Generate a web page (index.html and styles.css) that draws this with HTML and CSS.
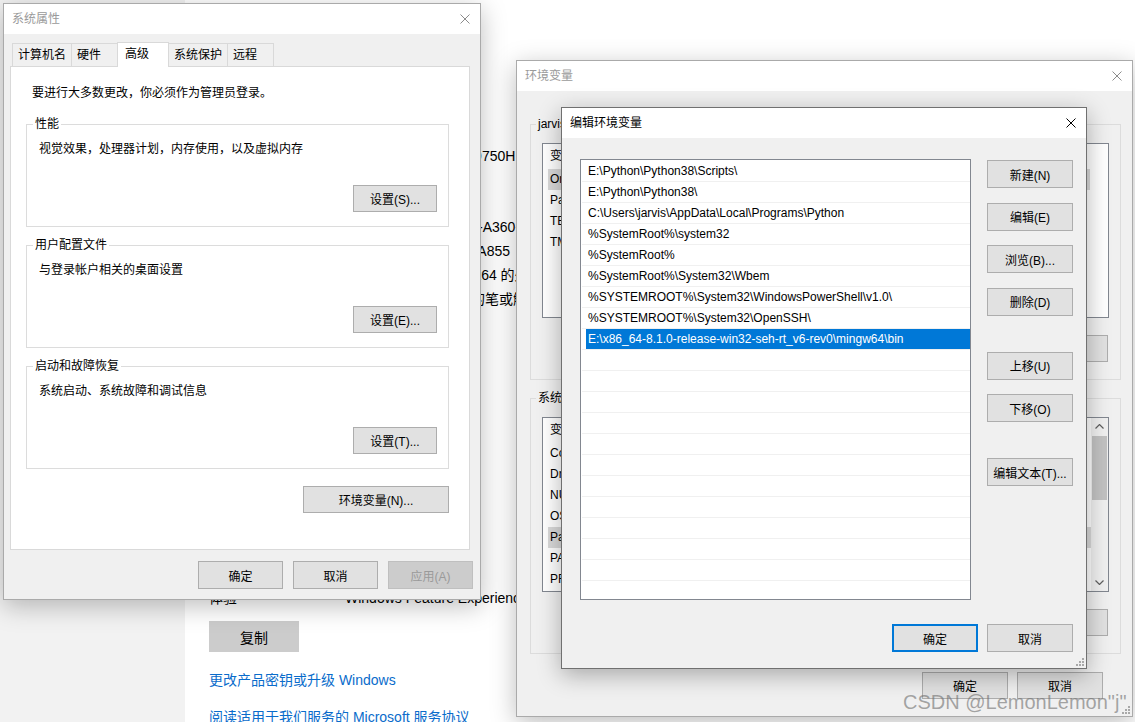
FILE: index.html
```html
<!DOCTYPE html>
<html lang="zh-CN">
  <head>
    <meta charset="UTF-8" />
    <meta name="viewport" content="width=device-width, initial-scale=1.0" />
    <title>编辑环境变量</title>
    <link rel="stylesheet" href="styles.css">
  </head>
  <body>
    <!-- settings page in the background -->
    <div class="settings">
      <div class="nav"></div>
      <div class="main">
        <div class="device-specs">
          <div class="spec"><span class="spec-name">设备名称</span><span class="spec-value">LAPTOP-JARVIS</span></div>
          <div class="spec"><span class="spec-name">处理器</span><span class="spec-value">Intel(R) Core(TM) i7-9750H CPU @ 2.60GHz<br />2.59 GHz</span></div>
          <div class="spec"><span class="spec-name">机带 RAM</span><span class="spec-value">16.0 GB</span></div>
          <div class="spec"><span class="spec-name">设备 ID</span><span class="spec-value">E2BDC4D3-1A4F-4C-A360-5D2E9F1C7B84</span></div>
          <div class="spec"><span class="spec-name">产品 ID</span><span class="spec-value">00342-35901-0000-AA855</span></div>
          <div class="spec"><span class="spec-name">系统类型</span><span class="spec-value">64 位操作系统, 基于 x64 的处理器</span></div>
          <div class="spec"><span class="spec-name">笔和触控</span><span class="spec-value">没有可用于此显示器的笔或触控输入</span></div>
        </div>
        <div class="win-specs">
          <h3>Windows 规格</h3>
          <div class="spec"><span class="spec-name">版本</span><span class="spec-value">Windows 10 家庭版</span></div>
          <div class="spec"><span class="spec-name">版本号</span><span class="spec-value">20H2</span></div>
          <div class="spec"><span class="spec-name">安装日期</span><span class="spec-value">2020/11/20</span></div>
          <div class="spec"><span class="spec-name">操作系统内部版本</span><span class="spec-value">19042.685</span></div>
          <div class="spec"><span class="spec-name">体验</span><span class="spec-value">Windows Feature Experience Pack 120.2212.551.0</span></div>
          <button class="copy-btn">复制</button>
          <a class="link" href="#">更改产品密钥或升级 Windows</a>
          <a class="link" href="#">阅读适用于我们服务的 Microsoft 服务协议</a>
        </div>
      </div>
    </div>

    <!-- 系统属性 -->
    <div class="window win-sys">
      <div class="titlebar">
        <span class="title">系统属性</span>
        <svg class="close" viewBox="0 0 10 10"><path d="M0.5 0.5L9.5 9.5M9.5 0.5L0.5 9.5" /></svg>
      </div>
      <div class="sys-body">
        <div class="tabs">
          <div class="tab">计算机名</div>
          <div class="tab">硬件</div>
          <div class="tab active">高级</div>
          <div class="tab">系统保护</div>
          <div class="tab">远程</div>
        </div>
        <div class="tab-panel">
          <p class="note">要进行大多数更改，你必须作为管理员登录。</p>
          <div class="group">
            <span class="group-title">性能</span>
            <div class="group-desc">视觉效果，处理器计划，内存使用，以及虚拟内存</div>
            <button class="btn btn-set">设置(S)...</button>
          </div>
          <div class="group">
            <span class="group-title">用户配置文件</span>
            <div class="group-desc">与登录帐户相关的桌面设置</div>
            <button class="btn btn-set">设置(E)...</button>
          </div>
          <div class="group">
            <span class="group-title">启动和故障恢复</span>
            <div class="group-desc">系统启动、系统故障和调试信息</div>
            <button class="btn btn-set">设置(T)...</button>
          </div>
          <button class="btn btn-env">环境变量(N)...</button>
        </div>
        <div class="dialog-buttons">
          <button class="btn">确定</button>
          <button class="btn">取消</button>
          <button class="btn" disabled>应用(A)</button>
        </div>
      </div>
    </div>

    <!-- 环境变量 -->
    <div class="window win-env">
      <div class="titlebar">
        <span class="title">环境变量</span>
        <svg class="close" viewBox="0 0 10 10"><path d="M0.5 0.5L9.5 9.5M9.5 0.5L0.5 9.5" /></svg>
      </div>
      <div class="env-body">
        <div class="env-group">
          <span class="group-title">jarvis 的用户变量(U)</span>
          <div class="var-list">
            <div class="var-rows no-scroll">
              <div class="var-row var-head"><span class="var-name">变量</span><span>值</span></div>
              <div class="var-row selected"><span class="var-name">OneDrive</span><span>C:\Users\jarvis\OneDrive</span></div>
              <div class="var-row"><span class="var-name">Path</span><span>E:\Python\Python38\Scripts\;E:\Python\Python38\</span></div>
              <div class="var-row"><span class="var-name">TEMP</span><span>%USERPROFILE%\AppData\Local\Temp</span></div>
              <div class="var-row"><span class="var-name">TMP</span><span>%USERPROFILE%\AppData\Local\Temp</span></div>
            </div>
          </div>
          <div class="env-buttons">
            <button class="btn">新建(W)...</button>
            <button class="btn">编辑(I)...</button>
            <button class="btn">删除(L)</button>
          </div>
        </div>
        <div class="env-group">
          <span class="group-title">系统变量(S)</span>
          <div class="var-list">
            <div class="var-rows">
              <div class="var-row var-head"><span class="var-name">变量</span><span>值</span></div>
              <div class="var-row"><span class="var-name">ComSpec</span><span>C:\WINDOWS\system32\cmd.exe</span></div>
              <div class="var-row"><span class="var-name">DriverData</span><span>C:\Windows\System32\Drivers\DriverData</span></div>
              <div class="var-row"><span class="var-name">NUMBER_OF_PROCESSORS</span><span>12</span></div>
              <div class="var-row"><span class="var-name">OS</span><span>Windows_NT</span></div>
              <div class="var-row selected"><span class="var-name">Path</span><span>E:\Python\Python38\Scripts\;E:\Python\Python38\;C:\Users</span></div>
              <div class="var-row"><span class="var-name">PATHEXT</span><span>.COM;.EXE;.BAT;.CMD;.VBS;.VBE;.JS;.JSE;.WSF;.WSH;.MSC</span></div>
              <div class="var-row"><span class="var-name">PROCESSOR_ARCHITECTURE</span><span>AMD64</span></div>
            </div>
            <div class="scrollbar">
              <div class="arrow"><svg viewBox="0 0 9 5" width="9" height="5"><path d="M0.5 4.5L4.5 0.5L8.5 4.5" /></svg></div>
              <div class="thumb"></div>
              <div class="arrow arrow-down"><svg viewBox="0 0 9 5" width="9" height="5"><path d="M0.5 0.5L4.5 4.5L8.5 0.5" /></svg></div>
            </div>
          </div>
          <div class="env-buttons">
            <button class="btn">新建(W)...</button>
            <button class="btn">编辑(I)...</button>
            <button class="btn">删除(L)</button>
          </div>
        </div>
        <div class="env-footer">
          <button class="btn">确定</button>
          <button class="btn">取消</button>
        </div>
      </div>
      <svg class="grip" viewBox="0 0 8 8"><rect x="6" y="0" width="2" height="2" /><rect x="3" y="3" width="2" height="2" /><rect x="6" y="3" width="2" height="2" /><rect x="0" y="6" width="2" height="2" /><rect x="3" y="6" width="2" height="2" /><rect x="6" y="6" width="2" height="2" /></svg>
    </div>

    <!-- 编辑环境变量 -->
    <div class="window win-edit">
      <div class="titlebar">
        <span class="title">编辑环境变量</span>
        <svg class="close" viewBox="0 0 10 10"><path d="M0.5 0.5L9.5 9.5M9.5 0.5L0.5 9.5" /></svg>
      </div>
      <div class="edit-body">
        <div class="edit-main">
          <div class="path-list" id="path-list"></div>
          <div class="btn-col">
            <button class="btn">新建(N)</button>
            <button class="btn">编辑(E)</button>
            <button class="btn">浏览(B)...</button>
            <button class="btn">删除(D)</button>
            <button class="btn gap-before">上移(U)</button>
            <button class="btn">下移(O)</button>
            <button class="btn gap-before">编辑文本(T)...</button>
          </div>
        </div>
        <div class="edit-footer">
          <button class="btn btn-default">确定</button>
          <button class="btn">取消</button>
        </div>
      </div>
      <svg class="grip" viewBox="0 0 8 8"><rect x="6" y="0" width="2" height="2" /><rect x="3" y="3" width="2" height="2" /><rect x="6" y="3" width="2" height="2" /><rect x="0" y="6" width="2" height="2" /><rect x="3" y="6" width="2" height="2" /><rect x="6" y="6" width="2" height="2" /></svg>
    </div>

    <div class="watermark">CSDN @LemonLemon"j"</div>

    <script>
      const paths = [
        "E:\\Python\\Python38\\Scripts\\",
        "E:\\Python\\Python38\\",
        "C:\\Users\\jarvis\\AppData\\Local\\Programs\\Python",
        "%SystemRoot%\\system32",
        "%SystemRoot%",
        "%SystemRoot%\\System32\\Wbem",
        "%SYSTEMROOT%\\System32\\WindowsPowerShell\\v1.0\\",
        "%SYSTEMROOT%\\System32\\OpenSSH\\",
        "E:\\x86_64-8.1.0-release-win32-seh-rt_v6-rev0\\mingw64\\bin",
      ];
      const list = document.getElementById("path-list");

      for (let i = 0; i < 21; i++) {
        const row = document.createElement("div");
        row.className = "path-row";
        const cell = document.createElement("span");
        cell.className = "path-cell";
        cell.textContent = paths[i] || "";
        if (i === paths.length - 1) {
          cell.classList.add("selected");
        }
        row.appendChild(cell);
        list.appendChild(row);
      }
    </script>
  </body>
</html>
```

FILE: styles.css
```css
* {
  box-sizing: border-box;
}
html,
body {
  margin: 0;
  padding: 0;
}
body {
  width: 1135px;
  height: 722px;
  overflow: hidden;
  position: relative;
  font-family: "Liberation Sans", "Noto Sans CJK SC", sans-serif;
  font-size: 12px;
  color: #000;
  background: #fff;
}

/* background settings page */
.settings {
  display: flex;
  height: 722px;
}
.nav {
  width: 185px;
  flex-shrink: 0;
  background: #f2f2f2;
}
.main {
  flex: 1;
  padding-left: 24px;
  font-size: 14px;
}
.device-specs {
  height: 466px;
  padding-top: 121px;
  display: flex;
  flex-direction: column;
  gap: 1px;
}
.spec {
  display: flex;
  line-height: 23px;
  white-space: nowrap;
}
.spec-name {
  width: 136px;
  flex-shrink: 0;
}
.win-specs h3 {
  margin: 0;
  font-size: 14px;
  font-weight: normal;
  line-height: 24px;
}
.win-specs .spec {
  line-height: 24px;
}
.copy-btn {
  display: block;
  margin-top: 11px;
  width: 90px;
  height: 31px;
  border: none;
  background: #cccccc;
  font-family: inherit;
  font-size: 14px;
  color: #000;
}
.link {
  display: block;
  margin-top: 18px;
  line-height: 20px;
  color: #0a6ccb;
  text-decoration: none;
}
.link + .link {
  margin-top: 17px;
}

/* windows */
.window {
  position: absolute;
  display: flex;
  flex-direction: column;
  background: #f0f0f0;
  border: 1px solid #aaaaaa;
  box-shadow: 0 6px 24px rgba(0, 0, 0, 0.26);
}
.win-sys {
  left: 3px;
  top: 3px;
  width: 478px;
  height: 597px;
}
.win-env {
  left: 516px;
  top: 60px;
  width: 617px;
  height: 657px;
}
.win-edit {
  left: 561px;
  top: 107px;
  width: 526px;
  height: 562px;
  border-color: #707070;
  box-shadow: 0 6px 22px rgba(0, 0, 0, 0.3);
}
.titlebar {
  height: 30px;
  flex-shrink: 0;
  background: #fff;
  display: flex;
  align-items: center;
  justify-content: space-between;
  padding: 0 10px 0 8px;
}
.title {
  line-height: 16px;
  color: #9a9a9a;
}
.win-edit .title {
  color: #000;
}
.close {
  width: 10px;
  height: 10px;
  fill: none;
  stroke: #8c8c8c;
  stroke-width: 1;
}
.win-edit .close {
  stroke: #000;
}
.grip {
  position: absolute;
  right: 2px;
  bottom: 2px;
  width: 8px;
  height: 8px;
  fill: #a8a8a8;
}

.btn {
  height: 27px;
  padding: 0;
  border: 1px solid #adadad;
  background: #e1e1e1;
  font-family: inherit;
  font-size: 12px;
  color: #000;
}
.btn:disabled {
  background: #cccccc;
  border-color: #bfbfbf;
  color: #9a9a9a;
}

/* 系统属性 */
.sys-body {
  padding: 9px 0 0 6px;
}
.tabs {
  display: flex;
  align-items: flex-end;
  height: 23px;
  margin-left: 2px;
  position: relative;
  z-index: 1;
}
.tab {
  min-width: 47px;
  height: 23px;
  padding: 0 5px;
  border: 1px solid #d9d9d9;
  border-bottom: none;
  line-height: 22px;
  background: #f0f0f0;
}
.tab + .tab {
  margin-left: -1px;
}
.tab.active {
  min-width: 52px;
  height: 25px;
  margin-bottom: -1px;
  padding-left: 7px;
  line-height: 22px;
  background: #fff;
}
.tab-panel {
  width: 460px;
  height: 484px;
  display: flex;
  flex-direction: column;
  padding-top: 18px;
  background: #fff;
  border: 1px solid #d9d9d9;
}
.note {
  margin: 0;
  padding-left: 21px;
  line-height: 16px;
}
.group {
  position: relative;
  height: 103px;
  margin: 18px 20px 0 15px;
  padding: 16px 11px 14px 12px;
  display: flex;
  flex-direction: column;
  border: 1px solid #dcdcdc;
}
.note + .group {
  margin-top: 23px;
}
.group-title {
  position: absolute;
  top: -9px;
  left: 6px;
  padding: 0 2px;
  line-height: 16px;
  background: #fff;
}
.group-desc {
  line-height: 16px;
}
.btn-set {
  width: 84px;
  margin-top: auto;
  align-self: flex-end;
}
.btn-env {
  width: 146px;
  margin: 17px 20px 0 0;
  align-self: flex-end;
}
.dialog-buttons {
  display: flex;
  justify-content: flex-end;
  gap: 10px;
  margin-top: 11px;
  padding-right: 7px;
}
.dialog-buttons .btn {
  width: 85px;
  height: 28px;
}

/* 环境变量 */
.env-body {
  display: flex;
  flex-direction: column;
  padding: 33px 11px 0 13px;
}
.env-group {
  position: relative;
  padding: 18px 11px 17px 11px;
  border: 1px solid #dcdcdc;
}
.env-group + .env-group {
  margin-top: 18px;
}
.env-group .group-title {
  left: 5px;
  background: #f0f0f0;
}
.var-list {
  height: 175px;
  display: flex;
  border: 1px solid #828790;
  background: #fff;
  overflow: hidden;
}
.var-rows {
  flex: 1;
  overflow: hidden;
}
.var-rows.no-scroll {
  padding-right: 18px;
}
.var-row {
  display: flex;
  height: 21px;
  line-height: 21px;
  margin-left: 5px;
  padding-left: 2px;
  white-space: nowrap;
  overflow: hidden;
}
.var-head {
  height: 25px;
  line-height: 25px;
}
.var-row.selected {
  background: #d9d9d9;
}
.var-name {
  width: 170px;
  flex-shrink: 0;
}
.scrollbar {
  width: 17px;
  flex-shrink: 0;
  display: flex;
  flex-direction: column;
  background: #f0f0f0;
}
.arrow {
  height: 17px;
  display: flex;
  align-items: center;
  justify-content: center;
}
.arrow svg {
  fill: none;
  stroke: #606060;
  stroke-width: 1.2;
}
.arrow-down {
  margin-top: auto;
}
.thumb {
  height: 64px;
  margin: 1px 1px 0;
  background: #c2c2c2;
}
.env-buttons {
  display: flex;
  justify-content: flex-end;
  gap: 9px;
  margin: 17px 1px 0 0;
}
.env-buttons .btn {
  width: 86px;
}
.env-footer {
  display: flex;
  justify-content: flex-end;
  gap: 9px;
  margin: 18px 18px 0 0;
}
.env-footer .btn {
  width: 86px;
}

/* 编辑环境变量 */
.edit-body {
  display: flex;
  flex-direction: column;
  padding: 21px 13px 0 18px;
}
.edit-main {
  display: flex;
  align-items: flex-start;
}
.path-list {
  width: 391px;
  height: 441px;
  padding-top: 1px;
  border: 1px solid #828790;
  background: #fff;
  overflow: hidden;
}
.path-row {
  height: 21px;
  margin-left: 1px;
  padding-left: 4px;
  border-bottom: 1px solid #f0f0f0;
}
.path-cell {
  display: block;
  height: 20px;
  padding-left: 2px;
  line-height: 20px;
  white-space: nowrap;
}
.path-cell.selected {
  background: #0078d7;
  color: #fff;
}
.btn-col {
  display: flex;
  flex-direction: column;
  gap: 14.5px;
  margin-left: 16px;
  padding-top: 1px;
}
.btn-col .btn {
  width: 86px;
  height: 28px;
}
.btn-col .gap-before {
  margin-top: 21.5px;
}
.edit-footer {
  display: flex;
  justify-content: flex-end;
  gap: 9px;
  margin-top: 24px;
}
.edit-footer .btn {
  width: 86px;
  height: 28px;
}
.btn-default {
  border: 2px solid #0078d7;
}

.watermark {
  position: absolute;
  left: 903px;
  top: 690px;
  font-size: 20px;
  line-height: 24px;
  color: rgba(110, 110, 110, 0.6);
  white-space: nowrap;
}
```
